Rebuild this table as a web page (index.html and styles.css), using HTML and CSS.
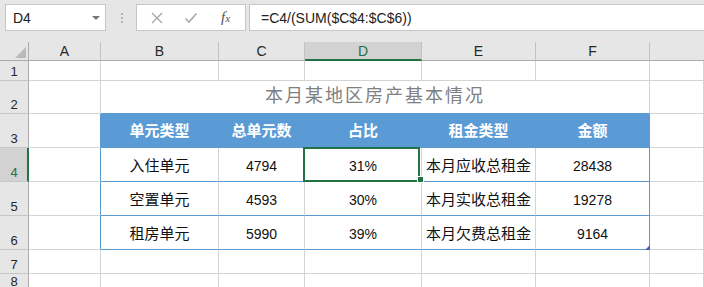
FILE: index.html
```html
<!DOCTYPE html>
<html lang="zh-CN">
<head>
    <meta charset="UTF-8">
    <title>本月某地区房产基本情况</title>
    <link rel="stylesheet" href="styles.css">
</head>
<body>
    <div class="topbar">
        <div class="namebox">
            <span>D4</span>
            <span class="caret"></span>
        </div>
        <div class="grip"></div>
        <div class="fx-buttons">
            <svg class="btn" width="14" height="14" viewBox="0 0 14 14">
                <path d="M2 2 L12 12 M12 2 L2 12" stroke="#a8a8a8" stroke-width="1.4" fill="none"/>
            </svg>
            <svg class="btn" width="14" height="14" viewBox="0 0 14 14">
                <path d="M1.5 7.5 L5 11 L12.5 2.5" stroke="#a8a8a8" stroke-width="1.6" fill="none"/>
            </svg>
            <span class="fx">f<small>x</small></span>
        </div>
        <div class="formula">=C4/(SUM($C$4:$C$6))</div>
    </div>

    <div class="sheet">
        <!-- заголовки столбцов -->
        <div class="cell corner"><span class="tri"></span></div>
        <div class="cell ch">A</div>
        <div class="cell ch">B</div>
        <div class="cell ch">C</div>
        <div class="cell ch active">D</div>
        <div class="cell ch">E</div>
        <div class="cell ch">F</div>
        <div class="cell ch last"></div>

        <!-- 1 -->
        <div class="cell rh">1</div>
        <div class="cell"></div>
        <div class="cell"></div>
        <div class="cell"></div>
        <div class="cell"></div>
        <div class="cell"></div>
        <div class="cell"></div>
        <div class="cell"></div>

        <!-- 2 -->
        <div class="cell rh">2</div>
        <div class="cell"></div>
        <div class="cell title">本月某地区房产基本情况</div>
        <div class="cell"></div>

        <!-- 3 -->
        <div class="cell rh">3</div>
        <div class="cell edge"></div>
        <div class="cell th">单元类型</div>
        <div class="cell th">总单元数</div>
        <div class="cell th">占比</div>
        <div class="cell th">租金类型</div>
        <div class="cell th">金额</div>
        <div class="cell"></div>

        <!-- 4 -->
        <div class="cell rh active">4</div>
        <div class="cell edge"></div>
        <div class="cell tb">入住单元</div>
        <div class="cell tb num">4794</div>
        <div class="cell tb num selected">31%</div>
        <div class="cell tb">本月应收总租金</div>
        <div class="cell tb num right">28438</div>
        <div class="cell"></div>

        <!-- 5 -->
        <div class="cell rh">5</div>
        <div class="cell edge"></div>
        <div class="cell tb">空置单元</div>
        <div class="cell tb num">4593</div>
        <div class="cell tb num">30%</div>
        <div class="cell tb">本月实收总租金</div>
        <div class="cell tb num right">19278</div>
        <div class="cell"></div>

        <!-- 6 -->
        <div class="cell rh">6</div>
        <div class="cell edge"></div>
        <div class="cell tb">租房单元</div>
        <div class="cell tb num">5990</div>
        <div class="cell tb num">39%</div>
        <div class="cell tb">本月欠费总租金</div>
        <div class="cell tb num right resize">9164</div>
        <div class="cell"></div>

        <!-- 7 -->
        <div class="cell rh">7</div>
        <div class="cell"></div>
        <div class="cell"></div>
        <div class="cell"></div>
        <div class="cell"></div>
        <div class="cell"></div>
        <div class="cell"></div>
        <div class="cell"></div>

        <!-- 8 -->
        <div class="cell rh">8</div>
        <div class="cell"></div>
        <div class="cell"></div>
        <div class="cell"></div>
        <div class="cell"></div>
        <div class="cell"></div>
        <div class="cell"></div>
        <div class="cell"></div>
    </div>
</body>
</html>
```

FILE: styles.css
```css
/* Основные стили */
body {
    margin: 0;
    font-family: 'Liberation Sans', 'Noto Sans CJK SC', sans-serif;
    color: #222;
    background: #fff;
    overflow: hidden;
}

/* Строка формул */
.topbar {
    height: 42px;
    box-sizing: border-box;
    padding: 4px 0 0 5px;
    background: #e6e6e6;
    display: flex;
    align-items: flex-start;
}

.namebox {
    width: 101px;
    height: 27px;
    box-sizing: border-box;
    background: #fff;
    border: 1px solid #c6c6c6;
    display: flex;
    align-items: center;
    padding-left: 7px;
    font-size: 14px;
}

.caret {
    margin-left: auto;
    margin-right: 5px;
    width: 0;
    height: 0;
    border-top: 4px solid #787878;
    border-left: 4px solid transparent;
    border-right: 4px solid transparent;
}

.grip {
    width: 2px;
    height: 2px;
    margin: 9px 0 0 15px;
    background: #b4b4b4;
    box-shadow: 0 4px #b4b4b4, 0 8px #b4b4b4;
}

.fx-buttons {
    width: 110px;
    height: 27px;
    box-sizing: border-box;
    margin-left: 13px;
    background: #fff;
    border: 1px solid #c6c6c6;
    display: flex;
    align-items: center;
    padding-left: 13px;
}

.fx-buttons .btn {
    margin-right: 20px;
}

.fx {
    margin-left: 3px;
    font-family: 'Liberation Serif', serif;
    font-style: italic;
    font-size: 15px;
    color: #555;
}

.fx small {
    font-size: 11px;
}

.formula {
    flex: 1;
    height: 27px;
    box-sizing: border-box;
    margin-left: 3px;
    background: #fff;
    border: 1px solid #c6c6c6;
    border-right: none;
    display: flex;
    align-items: center;
    padding-left: 11px;
    font-size: 14px;
}

/* Сетка листа */
.sheet {
    display: grid;
    grid-template-columns: 29px 72px 118px 86px 117px 114px 114px 1fr;
    grid-template-rows: 19px 20px 33px 34px 34px 34px 34px 24px 1fr;
    height: 245px;
    font-size: 15px;
}

.cell {
    box-sizing: border-box;
    border-right: 1px solid #d4d4d4;
    border-bottom: 1px solid #d4d4d4;
    display: flex;
    align-items: center;
    justify-content: center;
    padding-top: 3px;
    line-height: 18px;
    white-space: nowrap;
}

.corner {
    background: #e6e6e6;
    border-right: 1px solid #ababab;
    border-bottom: 1px solid #ababab;
    padding: 0;
    position: relative;
}

.tri {
    position: absolute;
    right: 2px;
    bottom: 2px;
    width: 0;
    height: 0;
    border-left: 11px solid transparent;
    border-bottom: 11px solid #b9b9b9;
}

.ch {
    background: #e6e6e6;
    border-right: 1px solid #c2c2c2;
    border-bottom: 1px solid #ababab;
    padding: 0;
    font-size: 14px;
    color: #262626;
}

.ch.last {
    border-right: none;
}

.ch.active {
    background: #d2d2d2;
    color: #217346;
    border-bottom: 2px solid #217346;
    padding-top: 1px;
}

.rh {
    background: #e6e6e6;
    border-right: 1px solid #ababab;
    border-bottom: 1px solid #c6c6c6;
    align-items: flex-end;
    padding: 0 0 1px;
    font-size: 13px;
    line-height: 15px;
    color: #262626;
}

.rh.active {
    background: #d2d2d2;
    color: #217346;
    border-right: 2px solid #217346;
    padding-left: 1px;
}

/* Таблица */
.title {
    grid-column: span 5;
    align-items: flex-end;
    padding: 0 0 5px;
    line-height: 24px;
    font-size: 18px;
    letter-spacing: 2px;
    color: #808080;
    border-bottom-color: #5b9bd5;
}

.th {
    background: #5b9bd5;
    border-color: #5b9bd5;
    color: #fff;
    font-weight: bold;
    padding-top: 1px;
}

.edge {
    border-right-color: #5b9bd5;
}

.tb {
    border-bottom-color: #5b9bd5;
    color: #111;
}

.tb.right {
    border-right-color: #5b9bd5;
}

.num {
    font-size: 14px;
}

.selected {
    position: relative;
}

.selected::after {
    content: '';
    position: absolute;
    top: -1px;
    left: -2px;
    right: 1px;
    bottom: -1px;
    border: 2px solid #217346;
}

.selected::before {
    content: '';
    position: absolute;
    right: -3px;
    bottom: -2px;
    width: 5px;
    height: 5px;
    background: #217346;
    border: 1px solid #fff;
    z-index: 1;
}

.resize {
    position: relative;
}

.resize::after {
    content: '';
    position: absolute;
    right: -1px;
    bottom: -1px;
    width: 0;
    height: 0;
    border-left: 5px solid transparent;
    border-bottom: 5px solid #4a5cb8;
}
```
